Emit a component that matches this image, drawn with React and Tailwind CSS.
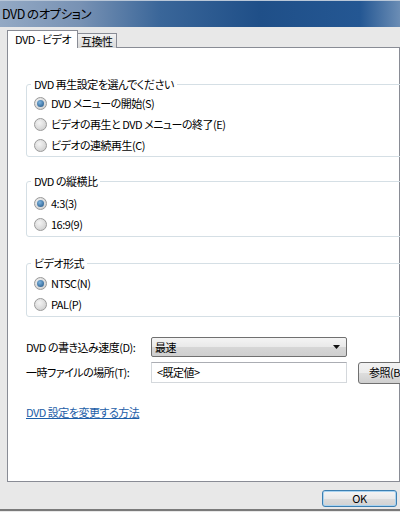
import React from "react";

const font = { fontFamily: '"Noto Sans CJK JP", "Noto Sans", sans-serif' };

function Radio({ checked, label }) {
  return (
    <div className="flex h-[21px] items-center whitespace-nowrap">
      <span className="ml-[7px] flex h-[13px] w-[13px] shrink-0 items-center justify-center rounded-full border border-[#9a9a9a] bg-[radial-gradient(circle_at_40%_35%,#f4f4f4,#c8c8c8)]">
        {checked && (
          <span className="h-[7px] w-[7px] rounded-full bg-[radial-gradient(circle_at_40%_35%,#7fb5e0,#1b4f80)]" />
        )}
      </span>
      <span className="ml-[4px] text-[11px] leading-none text-black">{label}</span>
    </div>
  );
}

function Group({ title, children, className }) {
  return (
    <fieldset className={"-mr-[4px] rounded-[3px] border border-[#d5dfe5] " + className}>
      <legend className="ml-[4px] whitespace-nowrap px-[3px] text-[11px] leading-[16px] text-black">{title}</legend>
      {children}
    </fieldset>
  );
}

export default function App() {
  return (
    <div className="relative h-[512px] w-[400px] overflow-hidden bg-[#e8e8e8] tracking-[-0.5px] [font-feature-settings:'palt']" style={font}>
      {/* title bar */}
      <div className="flex h-[27px] items-center border-t border-[#b9c7d8] bg-[linear-gradient(90deg,#93a9c4_0%,#7892b4_20%,#3a6699_40%,#1f4f88_65%,#245793_90%,#6b8db5_100%)] pl-[2px]">
        <span className="whitespace-nowrap text-[12.5px] text-black">DVD のオプション</span>
      </div>

      <div className="relative h-[485px] pl-[7px]">
        {/* tabs */}
        <div className="flex h-[21px] items-end pt-[4px]">
          <div className="relative z-10 flex h-[18px] w-[71px] shrink-0 items-center whitespace-nowrap border border-b-0 border-[#898c95] bg-white pl-[7px] text-[11px] text-black">
            DVD - ビデオ
          </div>
          <div className="flex h-[15px] shrink-0 items-center whitespace-nowrap border border-b-0 border-l-0 border-[#898c95] bg-[linear-gradient(#f2f2f2,#d8d8d8)] px-[3px] text-[11px] text-black">
            互換性
          </div>
        </div>

        {/* panel */}
        <div className="-mt-[1px] h-[435px] border border-[#898c95] bg-white pl-[18px] pr-0">
          <Group title="DVD 再生設定を選んでください" className="mt-[28px] pt-[1px]">
            <Radio checked label="DVD メニューの開始(S)" />
            <Radio label="ビデオの再生と DVD メニューの終了(E)" />
            <Radio label="ビデオの連続再生(C)" />
          </Group>

          <Group title="DVD の縦横比" className="mt-[16px] pt-[4px] pb-[1px]">
            <Radio checked label="4:3(3)" />
            <Radio label="16:9(9)" />
          </Group>

          <Group title="ビデオ形式" className="mt-[18px] pt-[2px] pb-[1px]">
            <Radio checked label="NTSC(N)" />
            <Radio label="PAL(P)" />
          </Group>

          <div className="mt-[20px] flex h-[20px] items-center whitespace-nowrap">
            <span className="w-[125px] shrink-0 text-[11px] text-black">DVD の書き込み速度(D):</span>
            <div className="flex h-[20px] w-[196px] shrink-0 items-center justify-between rounded-[2px] border border-[#707070] bg-[linear-gradient(#f4f4f4_0%,#e9e9e9_50%,#d6d6d6_51%,#cfcfcf_100%)] pl-[3px] pr-[6px]">
              <span className="text-[11px] text-black">最速</span>
              <svg width="7" height="4" viewBox="0 0 7 4">
                <path d="M0 0h7L3.5 4z" fill="#111" />
              </svg>
            </div>
          </div>

          <div className="mt-[5px] flex h-[21px] items-center whitespace-nowrap">
            <span className="w-[125px] shrink-0 text-[11px] text-black">一時ファイルの場所(T):</span>
            <div className="flex h-[21px] w-[196px] shrink-0 items-center border border-[#d4d8dc] border-t-[#abadb3] bg-white pl-[5px]">
              <span className="text-[11px] text-black">&lt;既定値&gt;</span>
            </div>
            <div className="relative z-10 ml-[11px] flex h-[22px] w-[70px] shrink-0 items-center rounded-[3px] border border-[#707070] bg-[linear-gradient(#f2f2f2_0%,#ebebeb_50%,#dddddd_51%,#cfcfcf_100%)] pl-[10px]">
              <span className="text-[11px] text-black">参照(B)</span>
            </div>
          </div>

          <div className="mt-[15px] h-[16px] whitespace-nowrap">
            <span className="text-[11px] leading-[16px] text-[#1c5ea8] underline">DVD 設定を変更する方法</span>
          </div>
        </div>

        {/* bottom strip */}
        <div className="flex h-[27px] justify-end pr-[3px] pt-[8px]">
          <div className="flex h-[17px] w-[75px] items-center justify-center rounded-[3px] border border-[#3c7fb1] bg-[linear-gradient(#f4f4f4_0%,#eaeaea_50%,#dcdcdc_51%,#d2d2d2_100%)] shadow-[inset_0_0_0_1px_#a9d3f0]">
            <span className="text-[11px] leading-none text-black">OK</span>
          </div>
        </div>
      </div>
      <div className="absolute bottom-[1px] left-0 h-[2px] w-full bg-[#7a7a7a]" />
    </div>
  );
}
